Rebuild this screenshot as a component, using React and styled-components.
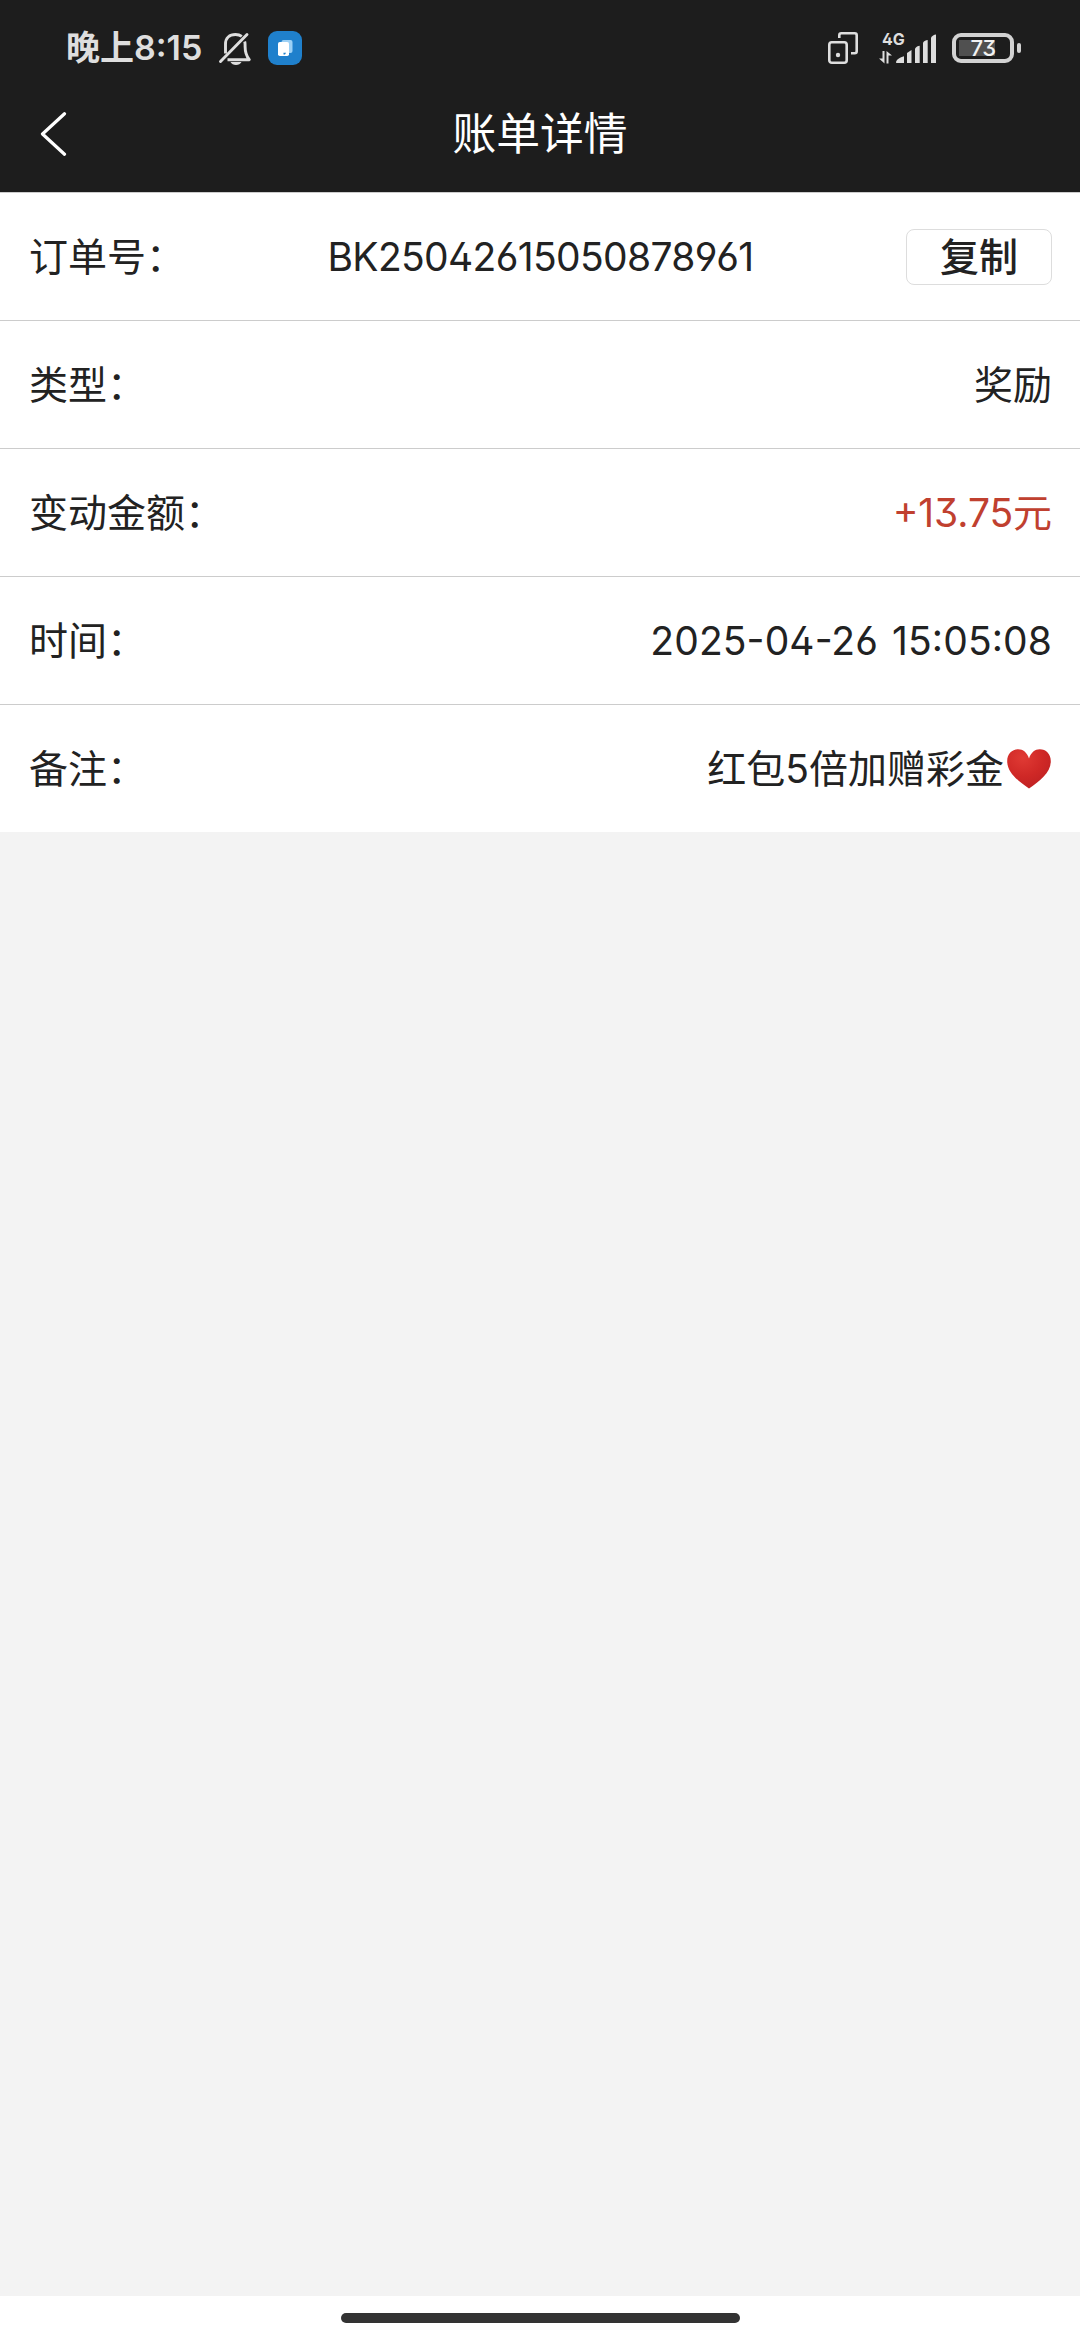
import React, {Fragment} from 'react'
import styled, {createGlobalStyle, ThemeProvider} from 'styled-components'

const theme = {
  colors: {
    bar: '#1d1d1d',
    barText: '#dedede',
    text: '#222222',
    page: '#f3f3f3',
    surface: '#ffffff',
    line: '#cccccc',
    buttonLine: '#dddddd',
    amount: '#c0402f',
    gesture: '#333333',
    app: '#1f80cc',
  },
}

const GlobalStyle = createGlobalStyle`
  * {
    box-sizing: border-box;
  }
  body {
    margin: 0;
    font-family: Inter, 'Noto Sans CJK SC', sans-serif;
    font-feature-settings: 'ss01', 'calt';
  }
`

const Screen = styled.div`
  display: flex;
  flex-direction: column;
  width: 1080px;
  height: 2340px;
  overflow: hidden;
  background: ${({theme: {colors}}) => colors.page};
  color: ${({theme: {colors}}) => colors.text};
`

const StatusBar = styled.div`
  display: flex;
  align-items: center;
  height: 78px;
  padding: 17px 59px 0 66px;
  background: ${({theme: {colors}}) => colors.bar};
  color: ${({theme: {colors}}) => colors.barText};
`

const StatusGroup = styled.div`
  display: flex;
  align-items: center;
  gap: ${({$gap}) => $gap}px;
  ${({$end}) => $end && 'margin-left: auto;'}
`

const Clock = styled.span`
  width: 136px;
  font-size: 34px;
  font-weight: 600;
  line-height: 40px;
  white-space: nowrap;
`

const AppBadge = styled.span`
  display: flex;
  width: 34px;
  height: 34px;
  border-radius: 9px;
  background: ${({theme: {colors}}) => colors.app};
`

const Signal = styled.div`
  position: relative;
  display: flex;
  margin-left: 5px;
`

const Network = styled.span`
  position: absolute;
  top: -1px;
  left: 3px;
  font-size: 16px;
  font-weight: 700;
  line-height: 16px;
`

const BatteryBody = styled.div`
  display: flex;
  align-items: center;
  justify-content: center;
  width: 62px;
  height: 30px;
  border: 4px solid #d2d2d2;
  border-radius: 9px;
  background: linear-gradient(#505050, #505050) 3px 3px / 36px 16px no-repeat;
  color: #f2f2f2;
  font-size: 22px;
  font-weight: 500;
  line-height: 22px;
  letter-spacing: -0.5px;
`

const BatteryTip = styled.div`
  width: 4px;
  height: 10px;
  border-radius: 2px;
  background: #d2d2d2;
`

const NavBar = styled.header`
  display: grid;
  grid-template-columns: 1fr auto 1fr;
  align-items: center;
  height: 114px;
  padding: 0 39px;
  background: ${({theme: {colors}}) => colors.bar};
  color: #ffffff;
`

const Back = styled.button`
  display: flex;
  justify-self: start;
  padding: 0 0 2px;
  border: none;
  background: none;
  color: inherit;
`

const Title = styled.h1`
  margin: 0;
  font-size: 43.8px;
  font-weight: 400;
  line-height: 60px;
`

const Row = styled.div`
  display: grid;
  grid-template-columns: 1fr auto 1fr;
  align-items: center;
  height: 128px;
  padding: 0 28px 0 29px;
  border-top: 1px solid ${({theme: {colors}}) => colors.line};
  background: ${({theme: {colors}}) => colors.surface};
  font-size: 39px;
  line-height: 56px;
  white-space: nowrap;
`

const Value = styled.span`
  display: flex;
  align-items: center;
  grid-column: ${({$middle}) => ($middle ? 2 : '2 / 4')};
  justify-self: end;
  letter-spacing: ${({$spacing = 0}) => $spacing}px;
  word-spacing: 3px;
  color: ${({$amount, theme: {colors}}) =>
    $amount ? colors.amount : 'inherit'};
`

const CopyButton = styled.button`
  justify-self: end;
  width: 146px;
  height: 56px;
  padding: 0;
  border: 1px solid ${({theme: {colors}}) => colors.buttonLine};
  border-radius: 8px;
  background: ${({theme: {colors}}) => colors.surface};
  color: inherit;
  font: inherit;
  font-weight: 500;
  line-height: 52px;
`

const GestureArea = styled.div`
  display: flex;
  justify-content: center;
  height: 44px;
  margin-top: auto;
  padding-top: 17px;
  background: ${({theme: {colors}}) => colors.surface};
`

const GesturePill = styled.div`
  width: 399px;
  height: 10px;
  border-radius: 5px;
  background: ${({theme: {colors}}) => colors.gesture};
`

const MutedBell = () => (
  <svg width="34" height="34" viewBox="0 0 34 34" fill="none">
    <g stroke="currentColor" strokeWidth="2.9" strokeLinejoin="round">
      <path d="M7.500 22.500V13C7.500 7 11.500 3.500 17.500 3.500c2.500 0 4.500.6 6.300 1.900" />
      <path d="M26.700 10.500c.5 1.500.4 3 .4 5 0 6 1.200 9.500 4.200 13.200H9.500" />
      <path d="M2.500 30.500 29 3.500" strokeLinecap="round" />
    </g>
    <path d="M12.500 31h11c-1 2.100-3 3-5.500 3s-4.500-.9-5.500-3z" fill="currentColor" />
  </svg>
)

const AppGlyph = () => (
  <svg width="34" height="34" viewBox="0 0 34 34">
    <rect x="13.500" y="9" width="11" height="13" rx="2" fill="#9cd0f5" />
    <rect x="10" y="11" width="11" height="14" rx="1.800" fill="#ffffff" />
    <path d="M15.500 21.700h2.500l-1 1.800h-1.500z" fill="#1f80cc" />
  </svg>
)

const CastIcon = () => (
  <svg width="30" height="32" viewBox="0 0 30 32" fill="none">
    <rect x="1.300" y="10.300" width="17.400" height="20.400" rx="2.500" stroke="currentColor" strokeWidth="2.600" />
    <path d="M11.300 6V3.300a2 2 0 0 1 2-2h13.400a2 2 0 0 1 2 2v15.900a2 2 0 0 1-2 2H23" stroke="currentColor" strokeWidth="2.600" />
    <circle cx="10" cy="23" r="2.200" fill="currentColor" />
  </svg>
)

const SignalIcon = () => (
  <svg width="57" height="32" viewBox="0 0 57 32" fill="currentColor">
    <path d="M3.500 19h2v12.500L0 26.500h3.500z" />
    <path d="M7.500 31.500V19L13 23.500H9.500v8z" />
    <path d="M17 30.500c0-3 4-5 8-6.300V31h-7.500z" />
    <path d="M28 21l4.500-3v13H28z" />
    <path d="M36 16.500c1-1.500 3-2.600 4.700-2.700V31H36z" />
    <path d="M44 10.500C45 9 47 8 48.700 8v23H44z" />
    <path d="M52 5.500C53 4 55 2.500 57 2.500V31h-5z" />
  </svg>
)

const BackIcon = () => (
  <svg width="30" height="44" viewBox="0 0 30 44" fill="none">
    <path d="M25.500 1.800 3.500 22l22 20.200" stroke="currentColor" strokeWidth="3.200" strokeLinecap="round" strokeLinejoin="round" />
  </svg>
)

const Heart = styled(({className}) => (
  <svg className={className} width="46" height="42" viewBox="0 0 46 42">
    <defs>
      <radialGradient id="heartFill" cx="0.36" cy="0.22" r="0.85">
        <stop offset="0" stopColor="#e03a34" />
        <stop offset="0.55" stopColor="#cf2826" />
        <stop offset="1" stopColor="#bd2022" />
      </radialGradient>
    </defs>
    <path
      d="M23 10.500C21 4.500 17 1.300 12.300 1.300 6 1.300 1.200 6 1.200 13.200 1.200 24.500 12 33 23 40.500 34 33 44.800 24.500 44.800 13.200 44.800 6 40 1.300 33.700 1.300 29 1.300 25 4.500 23 10.500z"
      fill="url(#heartFill)"
    />
  </svg>
))`
  margin-left: 2px;
`

const rows = [
  {label: '类型：', value: '奖励'},
  {label: '变动金额：', value: '+13.75元', amount: true, spacing: -0.1},
  {label: '时间：', value: '2025-04-26 15:05:08', spacing: 0.1},
  {
    label: '备注：',
    value: (
      <Fragment>
        红包5倍加赠彩金
        <Heart />
      </Fragment>
    ),
  },
]

const App = () => (
  <ThemeProvider theme={theme}>
    <GlobalStyle />
    <Screen>
      <StatusBar>
        <StatusGroup $gap={16}>
          <Clock>晚上8:15</Clock>
          <MutedBell />
          <AppBadge>
            <AppGlyph />
          </AppBadge>
        </StatusGroup>
        <StatusGroup $gap={16} $end>
          <CastIcon />
          <Signal>
            <SignalIcon />
            <Network>4G</Network>
          </Signal>
          <StatusGroup $gap={3}>
            <BatteryBody>73</BatteryBody>
            <BatteryTip />
          </StatusGroup>
        </StatusGroup>
      </StatusBar>
      <NavBar>
        <Back aria-label="返回">
          <BackIcon />
        </Back>
        <Title>账单详情</Title>
      </NavBar>
      <Row>
        <span>订单号：</span>
        <Value $middle $spacing={-0.65}>
          BK25042615050878961
        </Value>
        <CopyButton>复制</CopyButton>
      </Row>
      {rows.map(({label, value, amount, spacing}) => (
        <Row key={label}>
          <span>{label}</span>
          <Value $amount={amount} $spacing={spacing}>
            {value}
          </Value>
        </Row>
      ))}
      <GestureArea>
        <GesturePill />
      </GestureArea>
    </Screen>
  </ThemeProvider>
)

export default App
